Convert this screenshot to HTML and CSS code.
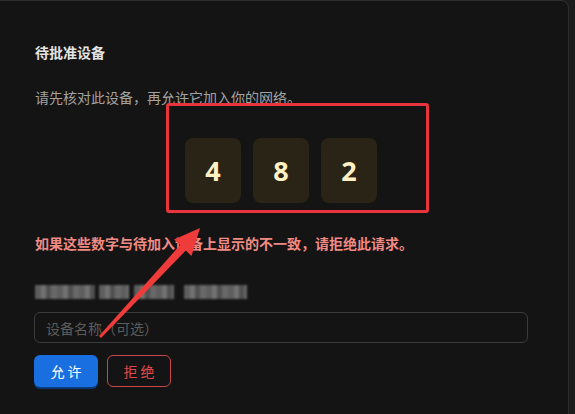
FILE: index.html
```html
<!DOCTYPE html>
<html lang="zh-CN">
<head>
<meta charset="utf-8">
<title>待批准设备</title>
<link rel="stylesheet" href="styles.css">
</head>
<body>
<div class="card">
  <h2 class="title">待批准设备</h2>
  <p class="desc">请先核对此设备，再允许它加入你的网络。</p>
  <div class="code">
    <div class="digit">4</div>
    <div class="digit">8</div>
    <div class="digit">2</div>
  </div>
  <p class="warn">如果这些数字与待加入设备上显示的不一致，请拒绝此请求。</p>
  <div class="masked">
    <span class="blk w60"></span>
    <span class="blk w30"></span>
    <span class="blk w40"></span>
    <span class="blk w63"></span>
  </div>
  <input class="field" type="text" placeholder="设备名称（可选）">
  <div class="actions">
    <button class="btn primary">允 许</button>
    <button class="btn danger">拒 绝</button>
  </div>
</div>
<div class="highlight"></div>
<svg class="arrow" width="575" height="414" viewBox="0 0 575 414">
  <polygon fill="#f03b3b" points="200,228 191.5,256 185.8,250.5 101,338 99,336 180.2,245 174,239.5"/>
</svg>
</body>
</html>
```
FILE: styles.css
```css
html, body {
  margin: 0;
  padding: 0;
}
body {
  width: 575px;
  height: 414px;
  overflow: hidden;
  background: #1c1c1c;
  font-family: "Noto Sans CJK SC", "Noto Sans", sans-serif;
  position: relative;
}
.card {
  box-sizing: border-box;
  width: 569px;
  height: 414px;
  background: #141414;
  border-top: 1px solid #2e2e2e;
  border-right: 1px solid #2e2e2e;
  border-top-right-radius: 8px;
  padding: 41px 41px 0 35px;
}
.title {
  margin: 0;
  font-size: 14px;
  line-height: 20px;
  font-weight: 700;
  color: #e4e4e4;
}
.desc {
  margin: 25px 0 0;
  font-size: 14px;
  line-height: 20px;
  color: #a3a3a3;
}
.code {
  display: flex;
  justify-content: center;
  gap: 12px;
  margin-top: 31px;
}
.digit {
  width: 56px;
  height: 65px;
  border-radius: 8px;
  background: #2a2416;
  display: flex;
  align-items: center;
  justify-content: center;
  font-family: "Open Sans", "Noto Sans", sans-serif;
  font-weight: 700;
  font-size: 27px;
  color: #fff1c4;
}
.warn {
  margin: 30px 0 0;
  font-size: 14px;
  line-height: 20px;
  font-weight: 600;
  color: #f08b84;
}
.masked {
  display: flex;
  gap: 4px;
  margin-top: 32px;
  height: 14px;
  filter: blur(1.2px);
}
.blk {
  display: block;
  height: 14px;
  background: repeating-linear-gradient(90deg, #5e5e5e 0 6px, #727272 6px 11px, #505050 11px 16px, #686868 16px 22px);
}
.w60 { width: 60px; }
.w30 { width: 30px; }
.w40 { width: 40px; margin-left: 1px; }
.w63 { width: 63px; margin-left: 6px; }
.field {
  display: block;
  box-sizing: border-box;
  width: 494px;
  height: 31px;
  margin: 13px 0 0 -1px;
  padding: 0 11px;
  background: transparent;
  border: 1px solid #3b3b3b;
  border-radius: 6px;
  font-family: "Noto Sans CJK SC", sans-serif;
  font-size: 14px;
  color: #ddd;
  outline: none;
}
.field::placeholder {
  color: #5c5c5c;
}
.actions {
  display: flex;
  gap: 9px;
  margin: 12px 0 0 -1px;
}
.btn {
  box-sizing: border-box;
  width: 64px;
  height: 32px;
  border-radius: 6px;
  font-family: "Noto Sans CJK SC", sans-serif;
  font-size: 14px;
  padding: 0;
  cursor: pointer;
}
.primary {
  background: #1a6fe0;
  color: #ffffff;
  border: none;
  box-shadow: 0 2px 0 #0c3a78;
}
.danger {
  background: transparent;
  color: #e0474a;
  border: 1px solid #c9464a;
}
.highlight {
  position: absolute;
  left: 166px;
  top: 103px;
  width: 263px;
  height: 110px;
  box-sizing: border-box;
  border: 3px solid #e8343c;
  border-radius: 3px;
}
.arrow {
  position: absolute;
  left: 0;
  top: 0;
}
```
